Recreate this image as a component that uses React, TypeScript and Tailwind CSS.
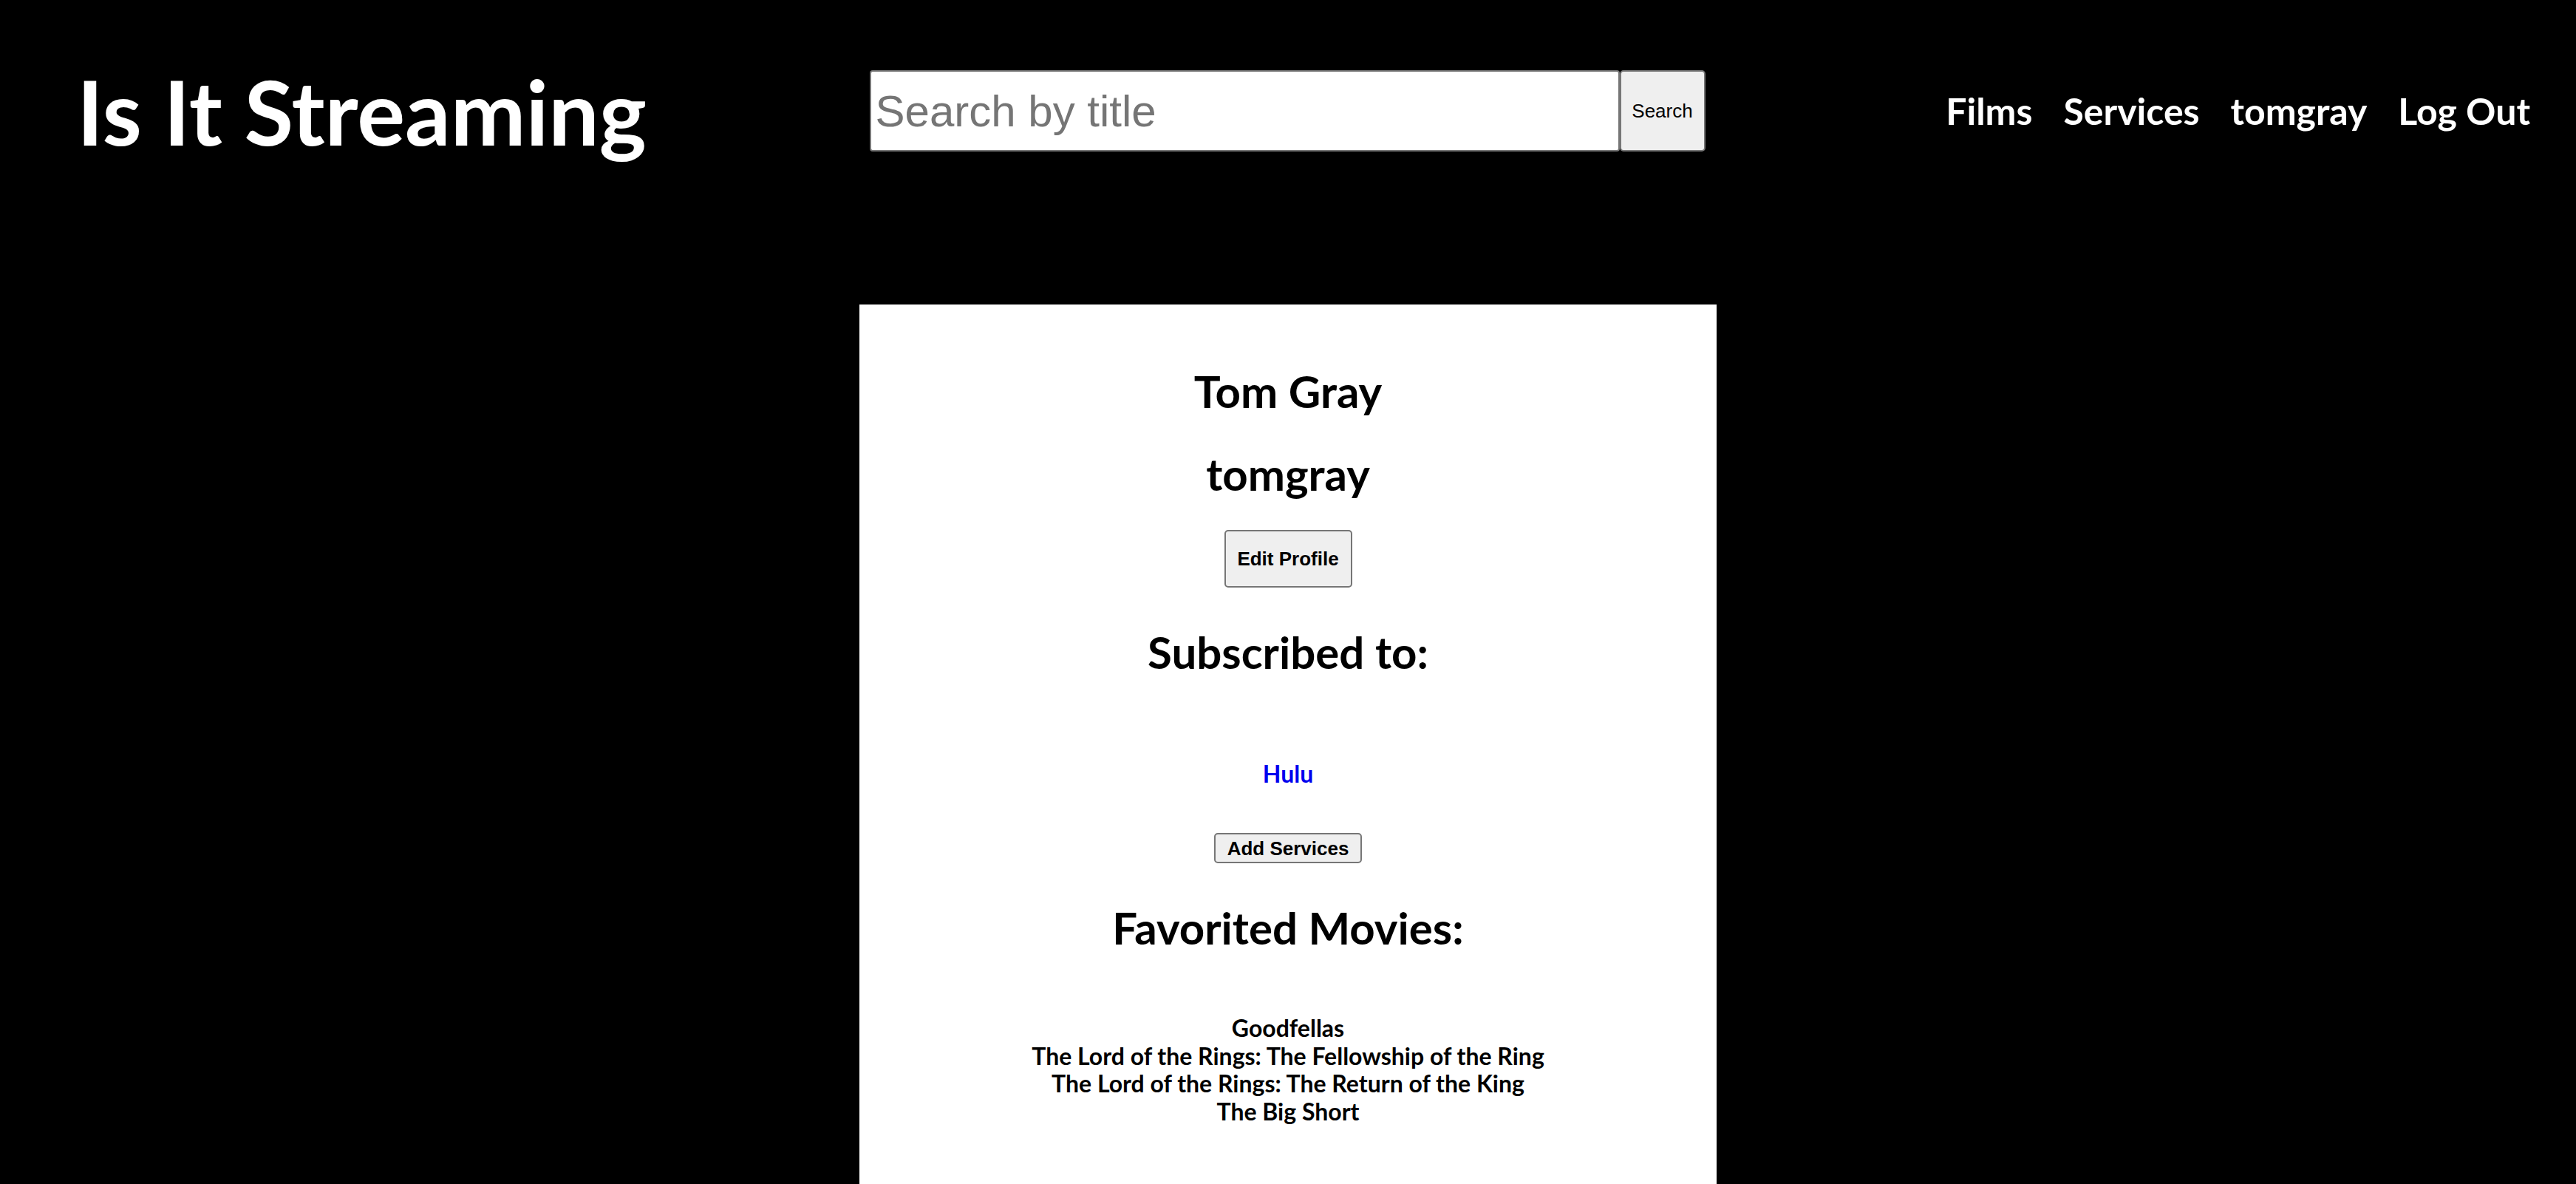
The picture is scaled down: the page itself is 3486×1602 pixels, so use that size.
const films = [
  'Goodfellas',
  'The Lord of the Rings: The Fellowship of the Ring',
  'The Lord of the Rings: The Return of the King',
  'The Big Short',
];

const navLinks = ['Films', 'Services', 'tomgray', 'Log Out'];

function Header() {
  return (
    <header className="grid grid-cols-[1fr_auto_1fr] items-center h-[300px] pl-[60px] pr-[62px]">
      <h1 className="justify-self-start pl-[44px] text-[121.5px] leading-[144px] font-bold text-white font-['Lato',sans-serif]">
        Is It Streaming
      </h1>
      <form className="flex" onSubmit={(e) => e.preventDefault()}>
        <input
          type="text"
          placeholder="Search by title"
          className="w-[1015px] h-[110px] px-[6px] bg-white border-2 border-[#767676] rounded-[4px] text-[60px] text-black placeholder:text-[#757575] font-['Liberation_Sans',Arial,sans-serif] outline-none"
        />
        <button
          type="submit"
          className="w-[116px] h-[110px] bg-[#efefef] border-2 border-[#767676] rounded-[5px] text-[26px] text-black font-['Liberation_Sans',Arial,sans-serif]"
        >
          Search
        </button>
      </form>
      <nav className="justify-self-end flex gap-[42px] text-[50px] leading-[60px] font-bold text-white font-['Lato',sans-serif]">
        {navLinks.map((link) => (
          <a key={link} href="#">
            {link}
          </a>
        ))}
      </nav>
    </header>
  );
}

function Profile() {
  return (
    <section className="mx-auto mt-[112px] w-[1160px] min-h-[1300px] bg-white flex flex-col items-center text-black font-['Lato',sans-serif] font-bold">
      <h2 className="mt-[81px] text-[60px] leading-[72px]">Tom Gray</h2>
      <h2 className="mt-[40px] text-[60px] leading-[72px]">tomgray</h2>
      <button className="mt-[40px] w-[173px] h-[78px] bg-[#efefef] border-2 border-[#767676] rounded-[5px] text-[26px] font-bold font-['Liberation_Sans',Arial,sans-serif]">
        Edit Profile
      </button>
      <h2 className="mt-[51px] text-[60px] leading-[72px]">Subscribed to:</h2>
      <a href="#" className="mt-[110px] text-[32px] leading-[38px] text-[#0000ee]">
        Hulu
      </a>
      <button className="mt-[61px] w-[200px] h-[41px] bg-[#efefef] border-2 border-[#767676] rounded-[5px] text-[26px] leading-[30px] font-bold font-['Liberation_Sans',Arial,sans-serif]">
        Add Services
      </button>
      <h2 className="mt-[51px] text-[60px] leading-[72px]">Favorited Movies:</h2>
      <ul className="mt-[81px] text-center text-[32px] leading-[37.7px]">
        {films.map((film) => (
          <li key={film}>{film}</li>
        ))}
      </ul>
    </section>
  );
}

export default function App() {
  return (
    <div className="min-h-screen bg-black overflow-hidden">
      <Header />
      <Profile />
    </div>
  );
}
